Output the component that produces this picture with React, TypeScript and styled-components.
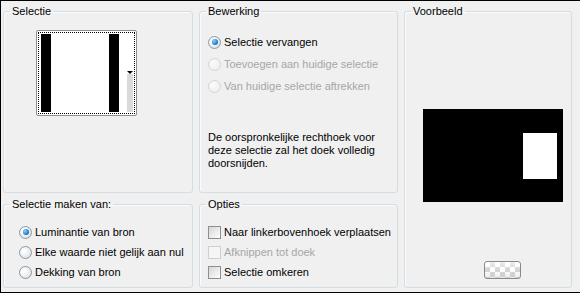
import React from 'react'
import styled, { createGlobalStyle } from 'styled-components'

const GlobalStyle = createGlobalStyle`
  html, body {
    margin: 0;
    padding: 0;
    background: #f0f0f0;
  }
  body {
    font-family: 'Liberation Sans', Arial, sans-serif;
    font-size: 11px;
    color: #000;
  }
`

type RadioItem = { label: string; checked?: boolean; disabled?: boolean }

const bewerking: RadioItem[] = [
  { label: 'Selectie vervangen', checked: true },
  { label: 'Toevoegen aan huidige selectie', disabled: true },
  { label: 'Van huidige selectie aftrekken', disabled: true },
]

const bron: RadioItem[] = [
  { label: 'Luminantie van bron', checked: true },
  { label: 'Elke waarde niet gelijk aan nul' },
  { label: 'Dekking van bron' },
]

const opties = [
  { label: 'Naar linkerbovenhoek verplaatsen' },
  { label: 'Afknippen tot doek', disabled: true },
  { label: 'Selectie omkeren' },
]

const RadioList = ({ items, rowHeight }: { items: RadioItem[]; rowHeight: number }) => (
  <List>
    {items.map((item) => (
      <Row key={item.label} $height={rowHeight} $disabled={item.disabled}>
        <Radio $checked={item.checked} $disabled={item.disabled} />
        {item.label}
      </Row>
    ))}
  </List>
)

export default function App() {
  return (
    <>
      <GlobalStyle />
      <Dialog>
        <Group $area="sel">
          <Legend>Selectie</Legend>
          <Body>
            <Thumb>
              <FocusRing>
                <Bar />
                <WhiteArea />
                <Bar />
                <Strip>
                  <Arrow />
                  <Scroll />
                </Strip>
              </FocusRing>
            </Thumb>
          </Body>
        </Group>

        <Group $area="bew">
          <Legend>Bewerking</Legend>
          <Body $padLeft={8} $padTop={13}>
            <RadioList items={bewerking} rowHeight={22} />
            <Description>
              De oorspronkelijke rechthoek voor
              <br />
              deze selectie zal het doek volledig
              <br />
              doorsnijden.
            </Description>
          </Body>
        </Group>

        <Group $area="voor">
          <Legend>Voorbeeld</Legend>
          <Body>
            <Preview>
              <PreviewSelection />
            </Preview>
            <CheckerButton />
          </Body>
        </Group>

        <Group $area="bron">
          <Legend>Selectie maken van:</Legend>
          <Body $padLeft={15} $padTop={11}>
            <RadioList items={bron} rowHeight={20} />
          </Body>
        </Group>

        <Group $area="opt">
          <Legend>Opties</Legend>
          <Body $padLeft={8} $padTop={11}>
            <List>
              {opties.map((o) => (
                <Row key={o.label} $height={20} $disabled={o.disabled}>
                  <Check $disabled={o.disabled} />
                  {o.label}
                </Row>
              ))}
            </List>
          </Body>
        </Group>
      </Dialog>
    </>
  )
}

const Dialog = styled.div`
  box-sizing: border-box;
  width: 580px;
  height: 293px;
  border-top: 1px solid #000;
  border-left: 1px solid #000;
  border-bottom: 1px solid #000;
  padding: 4px 0 4px 2px;
  display: grid;
  grid-template-columns: 190px 199px 168px;
  grid-template-rows: 188px 90px;
  column-gap: 6px;
  row-gap: 5px;
  grid-template-areas:
    'sel bew voor'
    'bron opt voor';
`

const Group = styled.fieldset<{ $area: string }>`
  grid-area: ${(p) => p.$area};
  margin: 0;
  padding: 0;
  min-width: 0;
  border: 1px solid #d3dde4;
  border-radius: 3px;
  box-shadow: inset 1px 1px 0 #fafbfc;
`

const Legend = styled.legend`
  margin-left: 6px;
  padding: 0 2px;
  line-height: 13px;
  color: #000;
`

const Body = styled.div<{ $padLeft?: number; $padTop?: number }>`
  padding: ${(p) => p.$padTop ?? 0}px 0 0 ${(p) => p.$padLeft ?? 0}px;
  display: flex;
  flex-direction: column;
  align-items: flex-start;
`

const Thumb = styled.div`
  box-sizing: border-box;
  margin: 12px 0 0 32px;
  width: 101px;
  height: 86px;
  border: 1px solid #8d8d8d;
  border-radius: 2px;
  background: #fff;
  padding: 1px;
`

const FocusRing = styled.div`
  box-sizing: border-box;
  height: 100%;
  border: 1px dotted #000;
  padding: 1px 1px 1px 2px;
  display: flex;
`

const Bar = styled.div`
  width: 10px;
  background: #000;
`

const WhiteArea = styled.div`
  width: 58px;
  background: #fff;
`

const Strip = styled.div`
  flex: 1;
  display: flex;
  flex-direction: column;
  align-items: flex-end;
  padding-top: 37px;
`

const Arrow = styled.div`
  width: 0;
  height: 0;
  border-left: 3px solid transparent;
  border-right: 3px solid transparent;
  border-top: 3px solid #000;
`

const Scroll = styled.div`
  flex: 1;
  width: 6px;
  background: #dadada;
`

const List = styled.div`
  display: flex;
  flex-direction: column;
`

const Row = styled.div<{ $height: number; $disabled?: boolean }>`
  height: ${(p) => p.$height}px;
  display: flex;
  align-items: center;
  gap: 3px;
  white-space: nowrap;
  color: ${(p) => (p.$disabled ? '#a6a6a6' : '#000')};
`

const Radio = styled.span<{ $checked?: boolean; $disabled?: boolean }>`
  box-sizing: border-box;
  width: 13px;
  height: 13px;
  border-radius: 50%;
  border: 1px solid ${(p) => (p.$disabled ? '#d2d4d6' : '#8c98a3')};
  background: ${(p) =>
    p.$disabled
      ? 'radial-gradient(circle at 35% 35%, #fbfbfb, #ebebeb)'
      : 'radial-gradient(circle at 35% 35%, #ffffff 10%, #d9dde0 90%)'};
  display: flex;
  align-items: center;
  justify-content: center;
  flex: none;

  &::after {
    content: '';
    display: ${(p) => (p.$checked ? 'block' : 'none')};
    width: 6px;
    height: 6px;
    border-radius: 50%;
    background: radial-gradient(circle at 35% 35%, #8fd0ff 0%, #2a86d0 55%, #0f4f8e 100%);
  }
`

const Check = styled.span<{ $disabled?: boolean }>`
  box-sizing: border-box;
  width: 13px;
  height: 13px;
  flex: none;
  border: 1px solid ${(p) => (p.$disabled ? '#cfcfcf' : '#8e8e8e')};
  background: ${(p) =>
    p.$disabled ? '#f5f5f5' : 'linear-gradient(135deg, #d6d6d6 0%, #f2f2f2 70%, #ffffff 100%)'};
`

const Description = styled.div`
  margin-top: 34px;
  line-height: 13px;
`

const Preview = styled.div`
  position: relative;
  margin: 91px 0 0 18px;
  width: 140px;
  height: 93px;
  background: #000;
`

const PreviewSelection = styled.div`
  position: absolute;
  left: 100px;
  top: 24px;
  width: 34px;
  height: 46px;
  background: #fff;
`

const CheckerButton = styled.div`
  box-sizing: border-box;
  margin: 59px 0 0 79px;
  width: 37px;
  height: 18px;
  border: 1px solid #8a8a8a;
  border-radius: 3px;
  background:
    linear-gradient(rgba(255, 255, 255, 0.6), rgba(255, 255, 255, 0) 50%, rgba(200, 200, 200, 0.4)),
    repeating-conic-gradient(#d4d4d4 0 25%, #ffffff 0 50%) 0 0 / 10px 10px;
`
